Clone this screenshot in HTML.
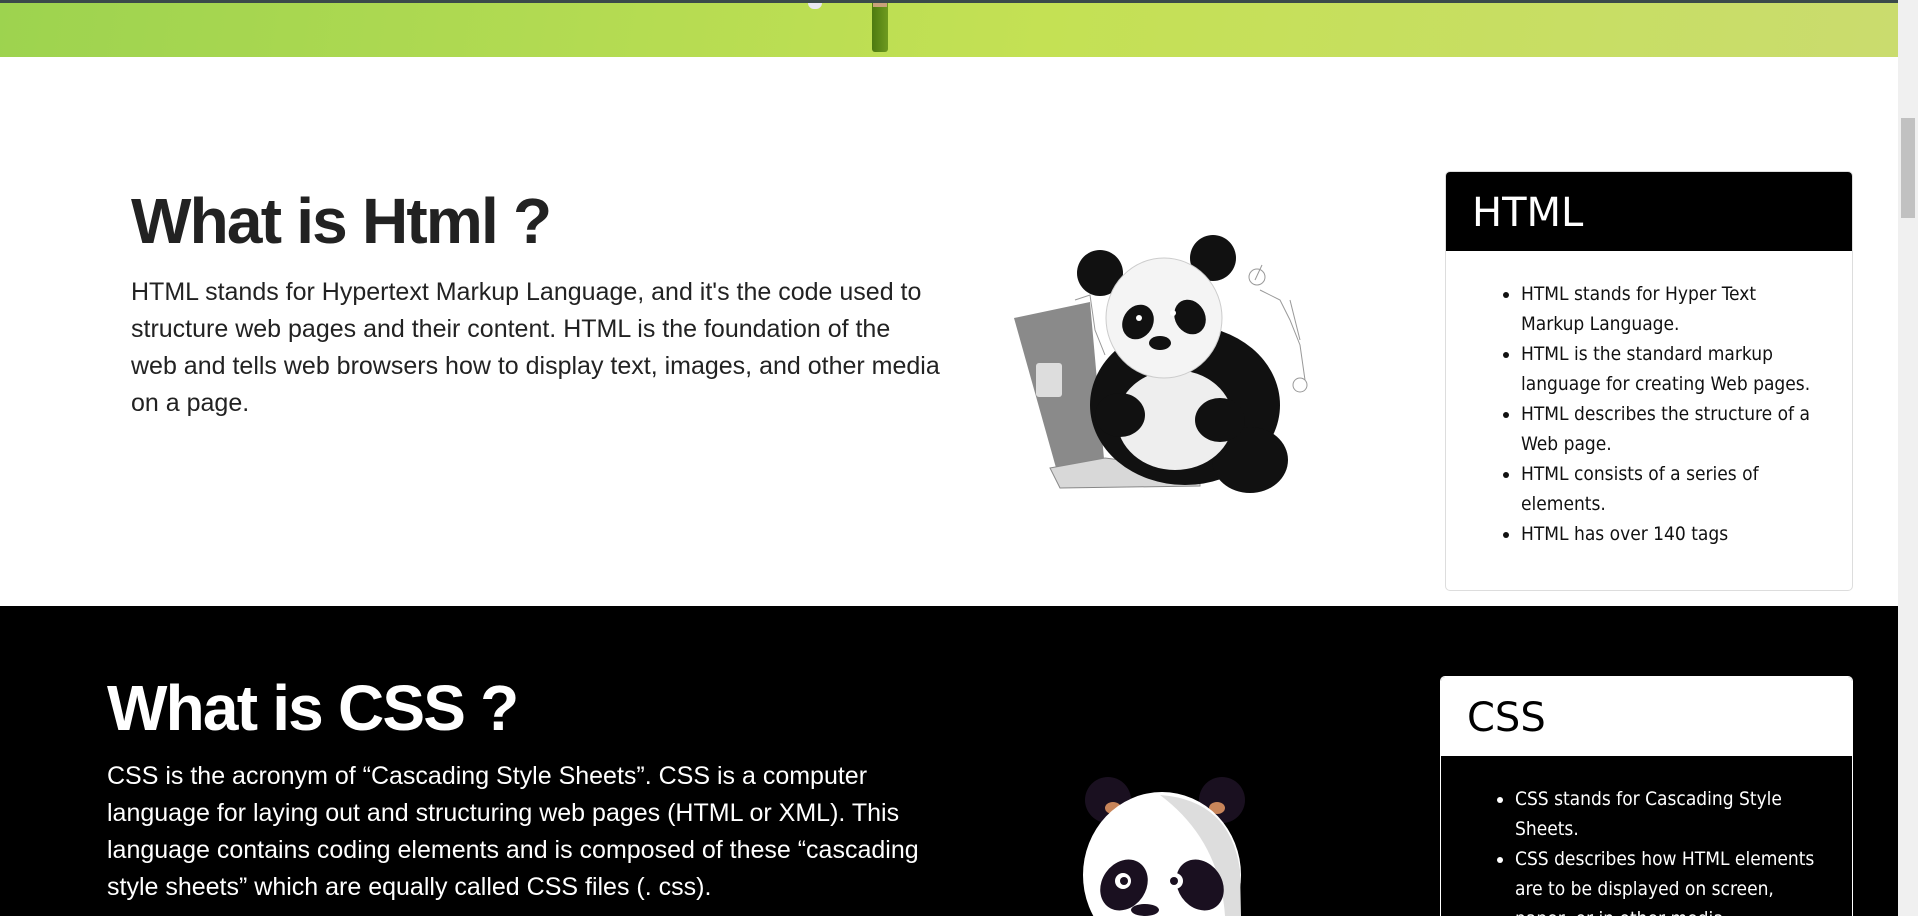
<!DOCTYPE html>
<html><head><meta charset="utf-8"><style>
*{margin:0;padding:0;box-sizing:border-box}
html,body{width:1918px;height:916px;overflow:hidden;background:#fff;font-family:"Liberation Sans",sans-serif}
.top{position:absolute;left:0;top:0;width:1898px;height:3px;background:#3b4a4a}
.banner{position:absolute;left:0;top:3px;width:1898px;height:54px;background:linear-gradient(100deg,#9dd34f 0%,#c4e154 55%,#cadc6e 100%)}
.sb{position:absolute;right:0;top:0;width:20px;height:916px;background:#f0f0f0}
.sb .th{position:absolute;left:3px;top:118px;width:14px;height:100px;background:#c1c1c1}
.s1{position:absolute;left:0;top:57px;width:1898px;height:549px;background:#fff}
.s2{position:absolute;left:0;top:606px;width:1898px;height:310px;background:#000;overflow:hidden}
h1{position:absolute;font-weight:bold;font-size:64px;letter-spacing:-1.8px}
p.t{position:absolute;font-size:25px;line-height:37px;white-space:nowrap}
.card{position:absolute;border:1px solid #ddd;border-radius:5px;overflow:hidden}
.card .h{height:79px;font-size:40px;padding:18px 0 0 26px;font-family:"DejaVu Sans","Liberation Sans",sans-serif}
.card ul{font-size:19px;line-height:30px;padding:28px 33px 0 75px;font-family:"DejaVu Sans Condensed","DejaVu Sans",sans-serif}
</style></head><body>
<div class="top"></div>
<div class="banner">
<div style="position:absolute;left:872px;top:0;width:16px;height:49px;background:linear-gradient(90deg,#4d7a10,#6e9a1f);border-radius:0 0 3px 3px"></div>
<div style="position:absolute;left:873px;top:0;width:14px;height:4px;background:#c9a27a"></div>
<div style="position:absolute;left:808px;top:0;width:14px;height:6px;background:#e8e8f0;border-radius:0 0 7px 7px"></div>
</div>
<div class="s1">
<h1 style="left:131px;top:127px;color:#222">What is Html ?</h1>
<p class="t" style="left:131px;top:217px;color:#222">HTML stands for Hypertext Markup Language, and it's the code used to<br>structure web pages and their content. HTML is the foundation of the<br>web and tells web browsers how to display text, images, and other media<br>on a page.</p>
<svg style="position:absolute;left:1000px;top:163px" width="340" height="290" viewBox="1000 220 340 290">
<g stroke="#999" stroke-width="1" fill="none"><path d="M1075 300 L1090 295 L1095 330 L1105 355 M1260 290 L1280 300 L1290 320 L1300 345 L1305 380 M1255 280 L1262 265 M1290 300 L1300 340"/><circle cx="1257" cy="277" r="8"/><circle cx="1300" cy="385" r="7"/></g>
<polygon points="1014,318 1090,302 1105,470 1060,482" fill="#8a8a8a"/>
<polygon points="1050,468 1105,458 1200,470 1200,486 1060,488" fill="#d8d8d8" stroke="#888"/>
<rect x="1036" y="363" width="26" height="34" fill="#ddd" rx="3"/>
<ellipse cx="1185" cy="405" rx="95" ry="80" fill="#111"/>
<ellipse cx="1250" cy="460" rx="38" ry="33" fill="#111"/>
<ellipse cx="1175" cy="420" rx="58" ry="50" fill="#eee"/>
<ellipse cx="1120" cy="415" rx="25" ry="22" fill="#111"/>
<ellipse cx="1220" cy="420" rx="25" ry="22" fill="#111"/>
<circle cx="1100" cy="273" r="23" fill="#111"/>
<circle cx="1213" cy="258" r="23" fill="#111"/>
<ellipse cx="1164" cy="318" rx="58" ry="60" fill="#f4f4f4" stroke="#ccc"/>
<ellipse cx="1138" cy="322" rx="15" ry="18" fill="#111" transform="rotate(30 1138 322)"/>
<ellipse cx="1190" cy="317" rx="15" ry="18" fill="#111" transform="rotate(-30 1190 317)"/>
<circle cx="1139" cy="318" r="3" fill="#fff"/><circle cx="1173" cy="313" r="3" fill="#fff"/>
<ellipse cx="1160" cy="343" rx="11" ry="7" fill="#111"/>
</svg>
<div class="card" style="left:1445px;top:114px;width:408px;height:420px;background:#fff">
<div class="h" style="background:#000;color:#fff">HTML</div>
<ul style="color:#111"><li>HTML stands for Hyper Text Markup Language.</li><li>HTML is the standard markup language for creating Web pages.</li><li>HTML describes the structure of a Web page.</li><li>HTML consists of a series of elements.</li><li>HTML has over 140 tags</li></ul>
</div>
</div>
<div class="s2">
<h1 style="left:107px;top:65px;color:#fff">What is CSS ?</h1>
<p class="t" style="left:107px;top:152px;color:#fff">CSS is the acronym of “Cascading Style Sheets”. CSS is a computer<br>language for laying out and structuring web pages (HTML or XML). This<br>language contains coding elements and is composed of these “cascading<br>style sheets” which are equally called CSS files (. css).</p>
<svg style="position:absolute;left:1040px;top:154px" width="260" height="156" viewBox="1040 760 260 156">
<circle cx="1108" cy="800" r="23" fill="#1a1020"/><circle cx="1222" cy="800" r="23" fill="#1a1020"/>
<ellipse cx="1113" cy="808" rx="8" ry="6" fill="#c8855a"/><ellipse cx="1217" cy="808" rx="8" ry="6" fill="#c8855a"/>
<ellipse cx="1162" cy="875" rx="79" ry="83" fill="#fff"/>
<path d="M1160 795 Q1230 800 1240 870 L1241 916 L1225 916 Q1220 840 1160 795Z" fill="#ddd"/>
<ellipse cx="1124" cy="885" rx="22" ry="27" fill="#1a1020" transform="rotate(35 1124 885)"/>
<ellipse cx="1200" cy="885" rx="22" ry="27" fill="#1a1020" transform="rotate(-35 1200 885)"/>
<circle cx="1123" cy="881" r="8" fill="#fff"/><circle cx="1175" cy="881" r="8" fill="#fff"/>
<circle cx="1124" cy="881" r="4" fill="#1a1020"/><circle cx="1174" cy="881" r="4" fill="#1a1020"/>
<ellipse cx="1145" cy="910" rx="14" ry="6" fill="#1a1020"/>
</svg>
<div class="card" style="left:1440px;top:70px;width:413px;height:400px;background:#000;border-color:#fff">
<div class="h" style="background:#fff;color:#000">CSS</div>
<ul style="color:#fff;padding-left:74px"><li>CSS stands for Cascading Style Sheets.</li><li>CSS describes how HTML elements are to be displayed on screen, paper, or in other media.</li></ul>
</div>
</div>
<div class="sb"><div class="th"></div></div>
</body></html>
